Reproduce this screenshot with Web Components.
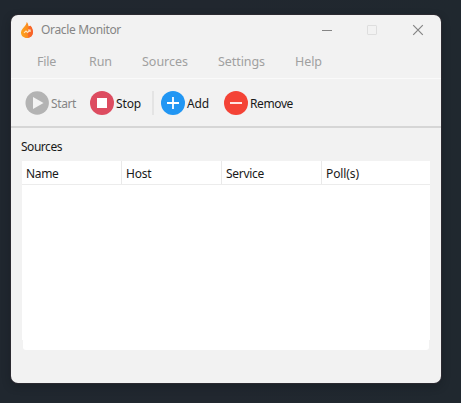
<!DOCTYPE html>
<html lang="en"><head><meta charset="utf-8"><title>Oracle Monitor</title>
<style>
html,body{margin:0;height:100%}
body{box-sizing:border-box;width:461px;height:403px;overflow:hidden;padding:15px 20px 20px 11px;background:linear-gradient(90deg,#20272f,#21272f 45%,#20282f);font:12px "Noto Sans","Open Sans",sans-serif;color:#191919}
</style></head><body>
<monitor-window></monitor-window>
<script>
const define=(name,html,setup)=>customElements.define(name,class extends HTMLElement{
  connectedCallback(){
    if(this.shadowRoot)return;
    const t=document.createElement('template');t.innerHTML=html;
    this.attachShadow({mode:'open'}).append(t.content.cloneNode(true));
    if(setup)setup(this);
  }
});

// A label whose tracking is adjusted so that the text fills its width.
define('fit-label','<style>:host{display:block;flex:none;white-space:nowrap}span{display:inline-block}</style><span></span>',el=>{
  const s=el.shadowRoot.querySelector('span'),w=+el.getAttribute('w');
  s.textContent=el.getAttribute('text');
  el.style.width=w+'px';
  const n=s.getBoundingClientRect().width;
  s.style.letterSpacing=(w-n)/s.textContent.length+'px';
});

define('title-bar',`<style>
:host{display:flex;height:29px;align-items:center;padding-left:9px;color:#858585}
svg{display:block;flex:none}.flame{margin-right:7px}.controls{margin-left:auto;margin-right:13px}
</style>
<svg class="flame" width="14" height="18" viewBox="0 0 14 18"><defs><linearGradient id="g" x1="0" x2="1"><stop stop-color="#fda51c"/><stop offset=".55" stop-color="#fb8c20"/><stop offset="1" stop-color="#f85d29"/></linearGradient></defs><path d="M6.7 1C7.7 2.1 8.3 3.4 8.5 5.3L10.5 4.8C12.2 7 13 9 13 11C13 14.7 10.5 17 7 17C3.5 17 1 14.7 1 11.5C1 8.8 3 7.7 4.7 5.3C5.9 3.8 6.5 2.6 6.7 1Z" fill="url(#g)"/><path d="M8.6 5.8L10.5 4.8C12.2 7 13 9 13 11C13 14 11.2 16.2 8.5 16.8L7.5 12Z" fill="#f86329" opacity=".7"/><path d="M4 11.8L6 10L7.6 11.5L10 9.2M8 9H10.1V11" fill="none" stroke="#ffe5bd" stroke-width="1.1"/></svg>
<fit-label text="Oracle Monitor" w="80"></fit-label>
<svg class="controls" width="106" height="14" viewBox="0 0 106 14" fill="none"><path d="M0 7.5H10" stroke="#858585"/><rect x="45.5" y="2.5" width="9" height="9" rx=".6" stroke="#dedede"/><path d="M91.2 2.2L100.8 11.8M100.8 2.2L91.2 11.8" stroke="#858585" stroke-width="1.2"/></svg>`);

define('menu-bar',`<style>:host{display:flex;height:34px;align-items:center;padding-left:26px;color:#a0a0a0;gap:32px;font-size:12.5px;border-bottom:1px solid #fafafa}</style>
<fit-label text="File" w="19"></fit-label><fit-label text="Run" w="23" style="margin-left:1px"></fit-label><fit-label text="Sources" w="46" style="margin-left:-2px"></fit-label><fit-label text="Settings" w="47" style="margin-left:-2px"></fit-label><fit-label text="Help" w="27" style="margin-left:-2px"></fit-label>`);

const glyphs={
  play:'<circle cx="12.2" cy="12" r="11.7" fill="#b3b3b3"/><path d="M8 6V18L18.5 12Z" fill="#f3f3f3"/>',
  stop:'<circle cx="12" cy="12" r="12" fill="#dd4c60"/><rect x="7" y="7" width="10" height="10" fill="#fff"/>',
  add:'<circle cx="12" cy="12" r="12" fill="#2196f3"/><path d="M6 12H18M12 6V18" stroke="#fff" stroke-width="1.8"/>',
  remove:'<circle cx="12" cy="12" r="12" fill="#f44336"/><path d="M6 12H18" stroke="#ffe5e3" stroke-width="1.8"/>'};
define('tool-button','<style>:host{display:flex;align-items:center;gap:2px;flex:none}svg{display:block;flex:none}</style><svg width="24" height="24" viewBox="0 0 24 24"></svg><slot></slot>',el=>{
  el.shadowRoot.querySelector('svg').innerHTML=glyphs[el.getAttribute('icon')];
});

define('tool-bar',`<style>:host{display:flex;box-sizing:border-box;height:49px;align-items:center;padding:1px 0 0 14px;border-bottom:2px solid #d6d6d6}i{width:2px;height:24px;background:#e4e4e4;margin:0 7px 0 11px}</style>
<tool-button icon="play"><fit-label text="Start" w="25" style="color:#858585"></fit-label></tool-button>
<tool-button icon="stop" style="margin-left:14px"><fit-label text="Stop" w="25"></fit-label></tool-button><i></i>
<tool-button icon="add"><fit-label text="Add" w="22"></fit-label></tool-button>
<tool-button icon="remove" style="margin-left:15px"><fit-label text="Remove" w="43"></fit-label></tool-button>`);

define('source-table',`<style>
:host{display:block;margin:0 11px}
.head{display:grid;grid-template-columns:100px 100px 100px 1fr;height:23px;background:#fff;border-bottom:1px solid #ececec}
.head div{display:flex;align-items:center;padding:2px 0 0 4px;border-right:1px solid #e9e9e9;box-sizing:border-box}.head div:last-child{border:0}
.rows{height:155px;background:#fff}.foot{height:10px;margin:0 1px;background:#fff;border-radius:0 0 3px 3px}
</style><div class="head"><div><fit-label text="Name" w="32.5"></fit-label></div><div><fit-label text="Host" w="25.5"></fit-label></div><div><fit-label text="Service" w="38"></fit-label></div><div><fit-label text="Poll(s)" w="33"></fit-label></div></div><div class="rows"></div><div class="foot"></div>`);

define('monitor-window',`<style>
:host{display:block;box-sizing:border-box;width:430px;height:368px;border-radius:7px;background:#f2f2f2;box-shadow:0 0 0 1px #2b2a31,0 3px 9px #10151a66;overflow:hidden}
fit-label{padding:10px 0 0 10px;height:23px}
</style><title-bar></title-bar><menu-bar></menu-bar><tool-bar></tool-bar><fit-label text="Sources" w="41"></fit-label><source-table></source-table>`);
</script></body></html>
